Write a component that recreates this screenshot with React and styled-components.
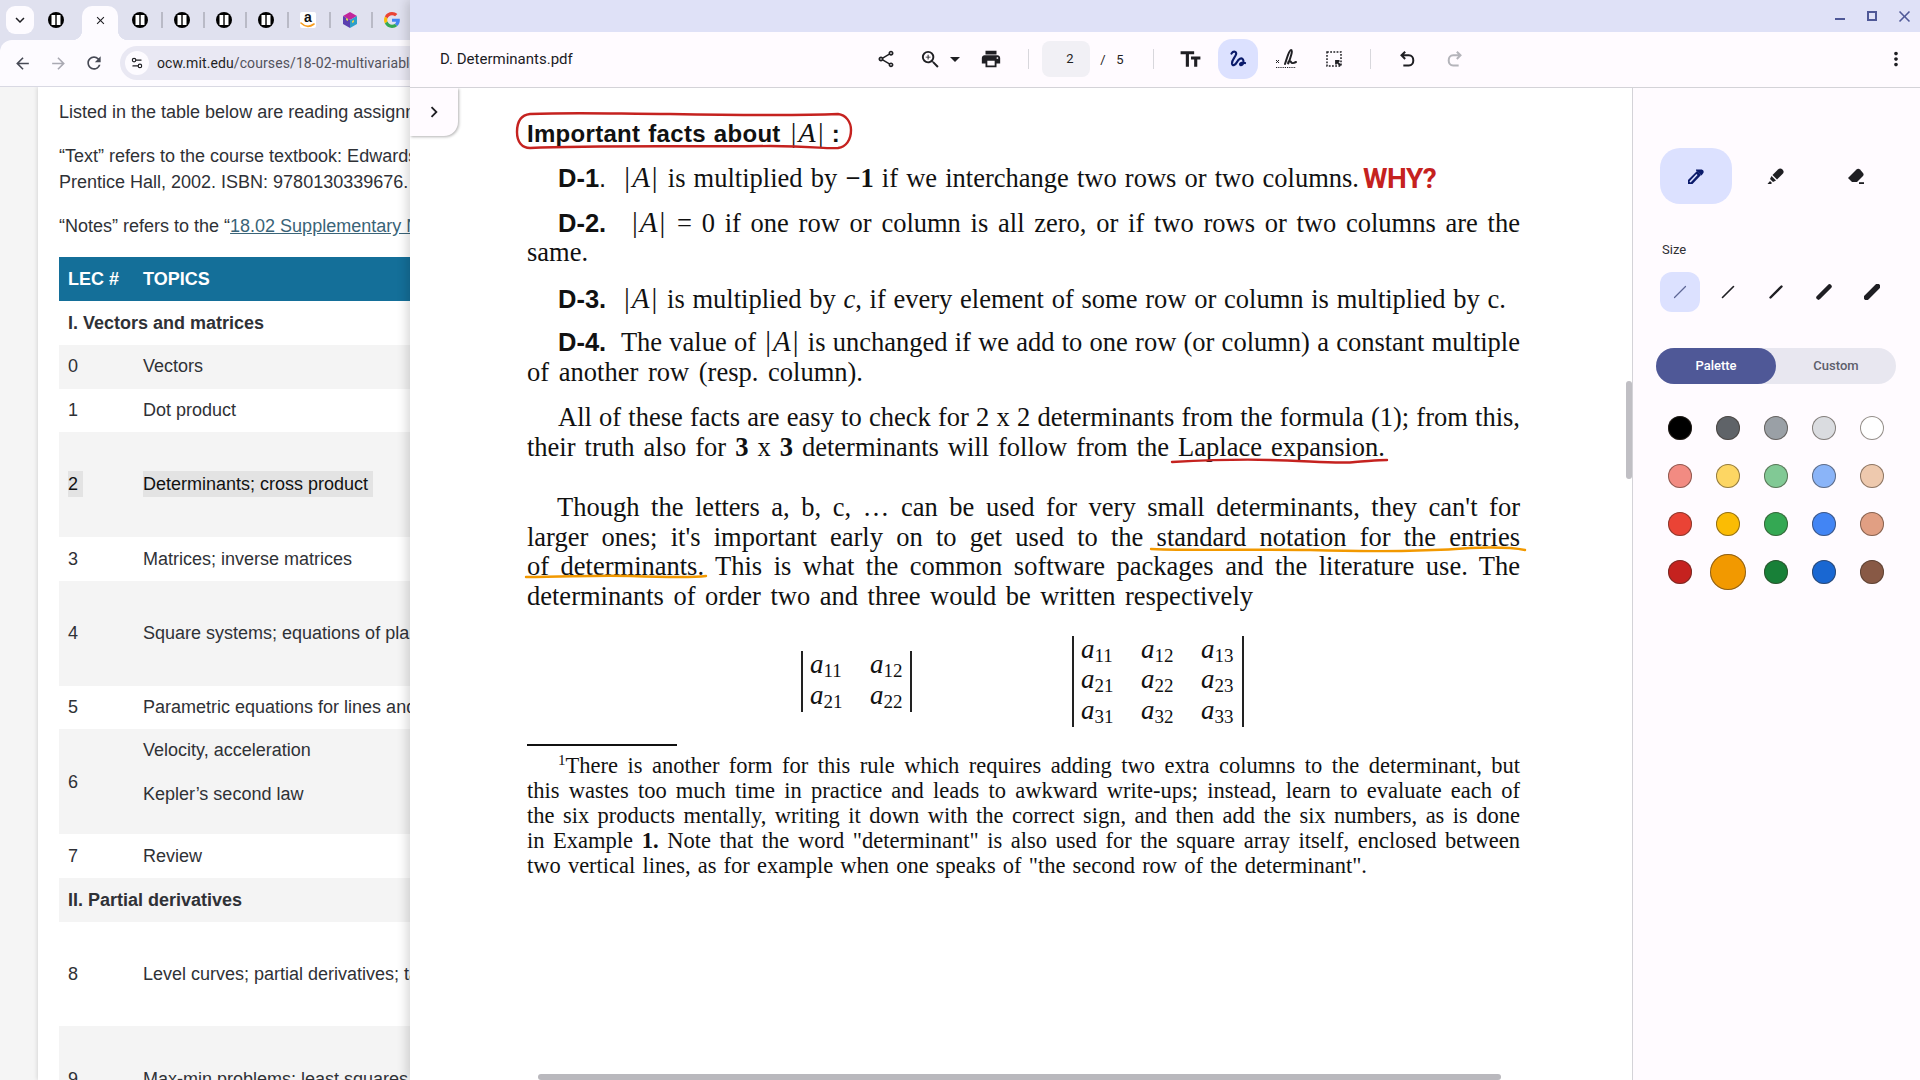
import React from 'react';
import styled, { createGlobalStyle } from 'styled-components';
import {
    MdArrowBack, MdArrowForward, MdRefresh, MdClose, MdKeyboardArrowDown, MdChevronRight,
    MdOutlineShare, MdZoomIn, MdPrint, MdArrowDropDown, MdTextFields, MdMoreVert,
} from 'react-icons/md';
import { Settings2 } from 'lucide-react';

const Global = createGlobalStyle`
    html, body { margin: 0; padding: 0; background: #fff; }
    * { box-sizing: border-box; }
`;

const App = () => (
    <>
        <Global />
        <Screen>
            <BrowserPane>
                <TabStrip>
                    <TabMenu><MdKeyboardArrowDown size={18} /></TabMenu>
                    <FirstSlot><OcwIcon /></FirstSlot>
                    <ActiveTab><MdClose size={13} /></ActiveTab>
                    <TabSlot $sep><OcwIcon /></TabSlot>
                    <TabSlot $sep><OcwIcon /></TabSlot>
                    <TabSlot $sep><OcwIcon /></TabSlot>
                    <TabSlot $sep><OcwIcon /></TabSlot>
                    <TabSlot $sep><AmazonIcon /></TabSlot>
                    <TabSlot $sep><CubeIcon /></TabSlot>
                    <TabSlot><GoogleIcon /></TabSlot>
                </TabStrip>
                <NavBar>
                    <NavIcon><MdArrowBack size={19} /></NavIcon>
                    <NavIcon $off><MdArrowForward size={19} /></NavIcon>
                    <NavIcon><MdRefresh size={20} /></NavIcon>
                    <Omnibox>
                        <SiteChip><Settings2 size={14} strokeWidth={2} /></SiteChip>
                        <Url><b>ocw.mit.edu</b>/courses/18-02-multivariable-calculus-fall-2007</Url>
                    </Omnibox>
                </NavBar>
                <Gutter>
                    <Card>
                        <Para>Listed in the table below are reading assignments for the course.</Para>
                        <Para>“Text” refers to the course textbook: Edwards and Penney, Multivariable Calculus.<br />Prentice Hall, 2002. ISBN: 9780130339676.</Para>
                        <Para>“Notes” refers to the “<CourseLink>18.02 Supplementary Notes</CourseLink>”</Para>
                        <HeadRow>
                            <LecCell>LEC #</LecCell>
                            <TopicCell>TOPICS</TopicCell>
                        </HeadRow>
                        <Row><SectionTitle>I. Vectors and matrices</SectionTitle></Row>
                        <Row $alt><LecCell>0</LecCell><TopicCell>Vectors</TopicCell></Row>
                        <Row><LecCell>1</LecCell><TopicCell>Dot product</TopicCell></Row>
                        <Row $alt $tall>
                            <LecCell><Picked>2</Picked></LecCell>
                            <TopicCell><Picked>Determinants; cross product</Picked></TopicCell>
                        </Row>
                        <Row><LecCell>3</LecCell><TopicCell>Matrices; inverse matrices</TopicCell></Row>
                        <Row $alt $tall><LecCell>4</LecCell><TopicCell>Square systems; equations of planes</TopicCell></Row>
                        <Row><LecCell>5</LecCell><TopicCell>Parametric equations for lines and curves</TopicCell></Row>
                        <Row $alt $tall>
                            <LecCell>6</LecCell>
                            <TopicStack>
                                <TopicLine>Velocity, acceleration</TopicLine>
                                <TopicLine>Kepler’s second law</TopicLine>
                            </TopicStack>
                        </Row>
                        <Row><LecCell>7</LecCell><TopicCell>Review</TopicCell></Row>
                        <Row $alt><SectionTitle>II. Partial derivatives</SectionTitle></Row>
                        <Row $tall><LecCell>8</LecCell><TopicCell>Level curves; partial derivatives; tangent plane</TopicCell></Row>
                        <Row $alt $tall><LecCell>9</LecCell><TopicCell>Max-min problems; least squares</TopicCell></Row>
                    </Card>
                </Gutter>
            </BrowserPane>

            <Viewer>
                <TitleBar>
                    <WinButton><MinGlyph /></WinButton>
                    <WinButton><MaxGlyph /></WinButton>
                    <WinButton><MdClose size={19} /></WinButton>
                </TitleBar>
                <Toolbar>
                    <FileName>D. Determinants.pdf</FileName>
                    <Tool><MdOutlineShare size={20} /></Tool>
                    <Tool $ml={20}><MdZoomIn size={23} /></Tool>
                    <Tool $w={14} $ml={6}><MdArrowDropDown size={24} /></Tool>
                    <Tool $ml={17}><MdPrint size={22} /></Tool>
                    <ToolSep $ml={25} />
                    <PageBox>2</PageBox>
                    <PageText $ml={8}>/</PageText>
                    <PageText $ml={7}>5</PageText>
                    <ToolSep $ml={28} />
                    <Tool $ml={24}><MdTextFields size={25} /></Tool>
                    <InkButton><InkIcon /></InkButton>
                    <Tool $ml={16}><SignIcon /></Tool>
                    <Tool $ml={24}><SelectIcon /></Tool>
                    <ToolSep $ml={24} />
                    <Tool $ml={24}><UndoIcon /></Tool>
                    <Tool $ml={24} $off><RedoIcon /></Tool>
                    <MoreTool><MdMoreVert size={22} /></MoreTool>
                </Toolbar>
                <Body>
                    <PdfArea>
                        <SideToggle><MdChevronRight size={22} /></SideToggle>
                        <Page>
                            <Heading>Important facts about <HeadMath>|<i>A</i>|</HeadMath>:</Heading>
                            <Line $top={14} $indent={31} $w={832}><Tag>D-1<span>.</span></Tag> <Abs /> is multiplied by <b>−1</b> if we interchange two rows or two columns.</Line>
                            <Line $top={15} $indent={31}><Tag $gap={14}>D-2.</Tag> <Abs /> = 0 if one row or column is all zero, or if two rows or two columns are the</Line>
                            <Line>same.</Line>
                            <Line $top={16} $indent={31} $w={979}><Tag>D-3.</Tag> <Abs /> is multiplied by <i>c</i>, if every element of some row or column is multiplied by c.</Line>
                            <Line $top={13} $indent={31}><Tag>D-4.</Tag> The value of <Abs /> is unchanged if we add to one row (or column) a constant multiple</Line>
                            <Line $top={1} $w={336}>of another row (resp. column).</Line>
                            <Line $top={15} $indent={31}>All of these facts are easy to check for 2 x 2 determinants from the formula (1); from this,</Line>
                            <Line $w={858}>their truth also for <b>3</b> x <b>3</b> determinants will follow from the Laplace expansion.</Line>
                            <Line $top={30} $indent={30}>Though the letters a, b, c, … can be used for very small determinants, they can't for</Line>
                            <Line>larger ones; it's important early on to get used to the standard notation for the entries</Line>
                            <Line $top={-1}>of determinants. This is what the common software packages and the literature use. The</Line>
                            <Line $w={726}>determinants of order two and three would be written respectively</Line>
                            <MatrixRow>
                                <Det $ml={274} $cols={2} $w={111}>
                                    {['11', '12', '21', '22'].map(s => <Entry key={s}><i>a</i><sub>{s}</sub></Entry>)}
                                </Det>
                                <Det $ml={160} $cols={3} $w={172}>
                                    {['11', '12', '13', '21', '22', '23', '31', '32', '33'].map(s => <Entry key={s}><i>a</i><sub>{s}</sub></Entry>)}
                                </Det>
                            </MatrixRow>
                            <FootRule />
                            <FootLine $first $indent={31}><sup>1</sup>There is another form for this rule which requires adding two extra columns to the determinant, but</FootLine>
                            <FootLine>this wastes too much time in practice and leads to awkward write-ups; instead, learn to evaluate each of</FootLine>
                            <FootLine>the six products mentally, writing it down with the correct sign, and then add the six numbers, as is done</FootLine>
                            <FootLine>in Example <b>1.</b> Note that the word "determinant" is also used for the square array itself, enclosed between</FootLine>
                            <FootLine $w={840}>two vertical lines, as for example when one speaks of "the second row of the determinant".</FootLine>
                        </Page>
                        <InkLayer viewBox="0 0 1222 992" width="1222" height="992">
                            <path stroke="#c5221f" d="M120 26 C170 24 210 26 260 26 C320 27 380 28 428 26 C436 27 441 34 441 42 C441 52 436 59 428 60 C415 61 405 58 360 58 C280 59 190 57 120 60 C112 60 107 54 107 44 C107 34 111 27 120 26 Z" />
                            <path stroke="#c5221f" d="M762 374 C800 372 830 371 860 372 C900 373 930 376 945 374 C960 373 968 372 977 372" />
                            <path stroke="#f29900" d="M741 461 C790 463 840 461 900 462 C960 464 1020 463 1060 460 C1085 459 1105 460 1115 462" />
                            <path stroke="#f29900" d="M116 489 C160 489 180 487 220 488 C250 489 280 490 296 488" />
                        </InkLayer>
                        <Why>WHY?</Why>
                        <VScroll />
                        <HScroll />
                    </PdfArea>
                    <Sidebar>
                        <ToolRow>
                            <PenKind $on><PenIcon /></PenKind>
                            <PenKind><MarkerIcon /></PenKind>
                            <PenKind><EraserIcon /></PenKind>
                        </ToolRow>
                        <SizeLabel>Size</SizeLabel>
                        <SizeRow>
                            {[1.2, 1.6, 2.4, 4.5, 5.5].map((w, i) => (
                                <SizeChip key={w} $on={i === 0}>
                                    <svg width="16" height="16" viewBox="0 0 16 16">
                                        <line x1="2.500" y1="13.500" x2="13.500" y2="2.500" stroke={i === 0 ? '#5d6696' : '#1f1f23'} strokeWidth={w} strokeLinecap="round" />
                                    </svg>
                                </SizeChip>
                            ))}
                        </SizeRow>
                        <Segment>
                            <SegOn>Palette</SegOn>
                            <SegOff>Custom</SegOff>
                        </Segment>
                        <Swatches>
                            {swatches.map((c, i) => (
                                <SwatchCell key={c + i}><Swatch $big={i === 16} style={{ background: c }} /></SwatchCell>
                            ))}
                        </Swatches>
                    </Sidebar>
                </Body>
            </Viewer>
        </Screen>
    </>
);

const swatches = [
    '#000000', '#5f6368', '#9aa0a6', '#dadce0', '#ffffff',
    '#f28b82', '#fdd663', '#81c995', '#8ab4f8', '#eec9ae',
    '#ea4335', '#fbbc04', '#34a853', '#4285f4', '#e19f83',
    '#c5221f', '#f29900', '#188038', '#1967d2', '#885945',
];

const Abs = () => <AbsMath>|<i>A</i>|</AbsMath>;

const OcwIcon = () => (
    <svg width="16" height="16" viewBox="0 0 16 16">
        <circle cx="8" cy="8" r="8" fill="#000" />
        <rect x="3.500" y="3" width="3.800" height="10" fill="#fff" />
        <rect x="8.700" y="3" width="3.800" height="10" fill="#fff" />
    </svg>
);

const AmazonIcon = () => (
    <AmazonBox>
        a
        <svg width="15" height="6" viewBox="0 0 15 6">
            <path d="M1 1 C5 5 10 5 14 2" fill="none" stroke="#f79c1d" strokeWidth="1.6" strokeLinecap="round" />
        </svg>
    </AmazonBox>
);

const CubeIcon = () => (
    <svg width="16" height="16" viewBox="0 0 16 16">
        <path d="M8 0 L15 4 L8 8 L1 4 Z" fill="#c2269b" />
        <path d="M1 4 L8 8 V16 L1 12 Z" fill="#5b3fb0" />
        <path d="M15 4 L8 8 V16 L15 12 Z" fill="#2e9fc9" />
        <path d="M4 6 L6 7 V9 L4 8 Z M10 9 L12 8 V10 L10 11 Z" fill="#e8d24a" />
    </svg>
);

const GoogleIcon = () => (
    <svg width="16" height="16" viewBox="0 0 48 48">
        <path fill="#EA4335" d="M24 9.5c3.5 0 6.7 1.2 9.2 3.6l6.9-6.9C35.9 2.4 30.5 0 24 0 14.6 0 6.5 5.4 2.6 13.2l8 6.2C12.5 13.6 17.800 9.500 24 9.500z" />
        <path fill="#4285F4" d="M47.500 24.500c0-1.600-.100-3.100-.400-4.500H24v9h12.700c-.600 2.900-2.200 5.400-4.700 7.100l7.700 6c4.500-4.200 7.800-10.300 7.800-17.600z" />
        <path fill="#FBBC05" d="M10.500 28.600c-.500-1.400-.800-3-.800-4.600s.300-3.200.800-4.600l-8-6.200C.900 16.500 0 20.100 0 24s.900 7.500 2.600 10.800l7.900-6.200z" />
        <path fill="#34A853" d="M24 48c6.500 0 11.900-2.100 15.900-5.800l-7.700-6c-2.100 1.400-4.900 2.300-8.200 2.300-6.200 0-11.500-4.200-13.400-9.900l-8 6.200C6.500 42.600 14.600 48 24 48z" />
    </svg>
);

const InkIcon = () => (
    <svg width="18" height="20" viewBox="0 0 18 20" fill="none" stroke="#0b1b6b" strokeWidth="2.2" strokeLinecap="round" strokeLinejoin="round">
        <path d="M2.500 4.500 C4.500 1.500 8 2.500 7 5.500 C6 8.500 2.500 11 3 14.500 C3.500 17.500 6.500 16 8 13 C9.500 10 12.500 8 14 10.500 C15.500 13 13.500 17 11.500 16 C10 15 12.500 12.500 16 14" />
    </svg>
);

const SignIcon = () => (
    <svg width="22" height="24" viewBox="0 0 22 24" fill="none" stroke="#1f1f23">
        <path d="M10 17 C12 11 14 3 16 3 C18 3 16 10 13 17 C13 14 15 13 16 15 C17 17 19 16 21 15" strokeWidth="2" strokeLinecap="round" />
        <path d="M1 13 L4 16 M4 13 L1 16" strokeWidth="1" />
        <path d="M1 20.500 H21" strokeWidth="1.200" strokeDasharray="1.200 1" />
    </svg>
);

const SelectIcon = () => (
    <svg width="18" height="18" viewBox="0 0 18 18" fill="none">
        <rect x="2" y="2" width="14" height="14" stroke="#1f1f23" strokeWidth="1.500" strokeDasharray="1.800 1.400" />
        <path d="M15.500 15.500 L12 12 M11 14.500 V11 H14.500" stroke="#1f1f23" strokeWidth="1.800" />
    </svg>
);

const UndoIcon = () => (
    <svg width="22" height="22" viewBox="0 0 24 24" fill="none" stroke="currentColor" strokeWidth="2.200">
        <path d="M10 4 L6 8 L10 12 M6 8 H14 C20.500 8 20.500 19 14 19 H8" />
    </svg>
);

const RedoIcon = () => (
    <svg width="22" height="22" viewBox="0 0 24 24" fill="none" stroke="currentColor" strokeWidth="2.200">
        <path d="M14 4 L18 8 L14 12 M18 8 H10 C3.500 8 3.500 19 10 19 H16" />
    </svg>
);

const PenIcon = () => (
    <svg width="18" height="18" viewBox="0 0 18 18" fill="#0b1b6b">
        <path d="M1 17 V13 L10 4 L14 8 L5.500 17 Z" />
        <path d="M3 15 L10 7.500" stroke="#dce1ff" strokeWidth="1.600" />
        <path d="M9 2.500 H14 C16.500 2.500 17.500 5 16 6.500 L14.500 8.500 L9 3.500 Z" />
    </svg>
);

const MarkerIcon = () => (
    <svg width="18" height="18" viewBox="0 0 18 18" fill="#1f1f23">
        <path d="M5.500 8 L11 2.500 C12.500 1 14 1 15.500 2.500 C17 4 17 5.500 15.500 7 L10 12.500 Z" />
        <path d="M4.500 9 L9 13.500 L6 15 L3 12 Z" />
        <path d="M0.500 17 L3 14 L5 16 L4 17 Z" />
    </svg>
);

const EraserIcon = () => (
    <svg width="18" height="18" viewBox="0 0 18 18" fill="#1f1f23">
        <path d="M1 11 L9.500 2.500 C10.500 1.500 12 1.500 13 2.500 L16 6 C16.800 7 16.800 8 16 9 L10 15 L5 15 Z" />
        <rect x="12" y="15.200" width="5" height="1.800" />
    </svg>
);

const Screen = styled.div`
    width: 1920px;
    height: 1080px;
    display: flex;
    overflow: hidden;
    font-family: Roboto, sans-serif;
`;

const BrowserPane = styled.div`
    width: 410px;
    flex: none;
    display: flex;
    flex-direction: column;
    background: #e0e1ef;
    overflow: hidden;
`;

const TabStrip = styled.div`
    height: 40px;
    flex: none;
    display: flex;
    align-items: flex-start;
    padding: 6px 0 0 6px;
`;

const TabMenu = styled.div`
    width: 28px;
    height: 28px;
    flex: none;
    border-radius: 9px;
    background: #fdfbff;
    color: #1f1f23;
    display: flex;
    align-items: center;
    justify-content: center;
`;

const FirstSlot = styled.div`
    width: 44px;
    height: 28px;
    flex: none;
    display: flex;
    align-items: center;
    justify-content: center;
    margin-right: 4px;
`;

const ActiveTab = styled.div`
    width: 36px;
    height: 34px;
    flex: none;
    margin-right: 1px;
    position: relative;
    background: #fdfbff;
    border-radius: 10px 10px 0 0;
    color: #1f1f23;
    display: flex;
    align-items: flex-start;
    justify-content: center;
    padding-top: 8px;

    &::before, &::after {
        content: '';
        position: absolute;
        bottom: 0;
        width: 10px;
        height: 10px;
    }
    &::before {
        left: -10px;
        background: radial-gradient(circle at 0 0, transparent 10px, #fdfbff 10.5px);
    }
    &::after {
        right: -10px;
        background: radial-gradient(circle at 100% 0, transparent 10px, #fdfbff 10.5px);
    }
`;

const TabSlot = styled.div`
    width: 42px;
    height: 28px;
    flex: none;
    position: relative;
    display: flex;
    align-items: center;
    justify-content: center;

    &::after {
        content: '';
        display: ${p => (p.$sep ? 'block' : 'none')};
        position: absolute;
        right: -2px;
        top: 6px;
        width: 2px;
        height: 16px;
        background: #b9bac6;
    }
`;

const AmazonBox = styled.div`
    width: 16px;
    height: 16px;
    border-radius: 2px;
    background: #fff;
    color: #111;
    font: 700 14px/11px 'Liberation Sans', sans-serif;
    text-align: center;
    overflow: hidden;

    svg { display: block; margin-top: -1px; }
`;

const NavBar = styled.div`
    height: 47px;
    flex: none;
    display: flex;
    align-items: center;
    background: #fdfbff;
    border-radius: 12px 0 0 0;
    border-bottom: 1px solid #d9d9e3;
    padding-left: 4px;
`;

const NavIcon = styled.div`
    width: 36px;
    flex: none;
    display: flex;
    justify-content: center;
    color: ${p => (p.$off ? '#a9a9b2' : '#474a55')};
`;

const Omnibox = styled.div`
    margin-left: 8px;
    flex: 1;
    min-width: 0;
    height: 34px;
    border-radius: 17px 0 0 17px;
    background: #e9e8f3;
    display: flex;
    align-items: center;
    padding-left: 5px;
    overflow: hidden;
`;

const SiteChip = styled.div`
    width: 24px;
    height: 24px;
    flex: none;
    border-radius: 50%;
    background: #fdfbff;
    color: #1f1f23;
    display: flex;
    align-items: center;
    justify-content: center;
`;

const Url = styled.div`
    margin-left: 8px;
    font: 400 14px Roboto, sans-serif;
    letter-spacing: 0.1px;
    color: #52525c;
    white-space: nowrap;

    b { font-weight: 400; color: #1f1f23; }
`;

const Gutter = styled.div`
    flex: 1;
    min-height: 0;
    background: #f5f5f5;
    padding-left: 38px;
    overflow: hidden;
`;

const Card = styled.div`
    height: 100%;
    background: #fff;
    box-shadow: -1px 0 4px rgba(0, 0, 0, 0.12);
    padding: 12px 0 0 21px;
    color: #2f3136;
    font: 400 18px/26.500px 'Liberation Sans', Arial, sans-serif;
    white-space: nowrap;
    overflow: hidden;
`;

const Para = styled.p`
    margin: 0 0 17.330px;
`;

const CourseLink = styled.span`
    color: #3a6478;
    text-decoration: underline;
`;

const Row = styled.div`
    width: 700px;
    height: ${p => (p.$tall ? 104.7 : 43.85)}px;
    display: flex;
    align-items: center;
    background: ${p => (p.$alt ? '#f4f4f4' : '#fff')};
`;

const HeadRow = styled(Row)`
    background: #146f99;
    color: #fff;
    font-weight: 700;
`;

const LecCell = styled.div`
    width: 84px;
    flex: none;
    padding-left: 9px;
`;

const TopicCell = styled.div`
    flex: 1;
`;

const TopicStack = styled.div`
    flex: 1;
    align-self: flex-start;
`;

const TopicLine = styled.div`
    height: 43.850px;
    line-height: 43.850px;
`;

const SectionTitle = styled.div`
    padding-left: 9px;
    font-weight: 700;
`;

const Picked = styled.span`
    display: inline-block;
    background: #e3e3e3;
    color: #111;
    padding-right: 5px;
    line-height: 26px;
`;

const Viewer = styled.div`
    width: 1510px;
    flex: none;
    display: flex;
    flex-direction: column;
    position: relative;
    z-index: 2;
    box-shadow: -3px 0 10px rgba(0, 0, 0, 0.16);
`;

const TitleBar = styled.div`
    height: 32px;
    flex: none;
    background: #dfe1f7;
    display: flex;
    justify-content: flex-end;
    color: #4f5897;
`;

const WinButton = styled.div`
    width: 32px;
    display: flex;
    align-items: center;
    justify-content: center;
`;

const MinGlyph = styled.div`
    width: 10px;
    height: 2px;
    background: #4f5897;
    margin-top: 6px;
`;

const MaxGlyph = styled.div`
    width: 10px;
    height: 10px;
    border: 2px solid #4f5897;
`;

const Toolbar = styled.div`
    height: 56px;
    flex: none;
    display: flex;
    align-items: center;
    background: #fffbff;
    border-bottom: 1px solid #d4d3d8;
    padding: 0 0 1px 30px;
    color: #1f1f23;
`;

const FileName = styled.div`
    width: 434px;
    flex: none;
    font: 400 15px Roboto, sans-serif;
    color: #1b1b1f;
`;

const Tool = styled.div`
    width: ${p => p.$w || 24}px;
    height: 24px;
    flex: none;
    margin-left: ${p => p.$ml || 0}px;
    display: flex;
    align-items: center;
    justify-content: center;
    color: ${p => (p.$off ? '#b4b4ba' : '#1f1f23')};

    svg { flex: none; }
`;

const MoreTool = styled(Tool)`
    margin-left: auto;
    margin-right: 12px;
`;

const ToolSep = styled.div`
    width: 1px;
    height: 20px;
    flex: none;
    margin-left: ${p => p.$ml}px;
    background: #d8d7dc;
`;

const PageBox = styled.div`
    width: 48px;
    height: 36px;
    flex: none;
    margin-left: 13px;
    border-radius: 8px;
    background: #f1f0f5;
    font: 400 13px/36px Roboto, sans-serif;
    text-align: center;
    padding-left: 8px;
`;

const PageText = styled.div`
    width: 10px;
    flex: none;
    margin-left: ${p => p.$ml}px;
    font: 400 13px Roboto, sans-serif;
    text-align: center;
`;

const InkButton = styled.div`
    width: 40px;
    height: 40px;
    flex: none;
    margin-left: 16px;
    border-radius: 14px;
    background: #dce1ff;
    display: flex;
    align-items: center;
    justify-content: center;
`;

const Body = styled.div`
    flex: 1;
    min-height: 0;
    display: flex;
`;

const PdfArea = styled.div`
    flex: 1;
    min-width: 0;
    position: relative;
    background: #fff;
    overflow: hidden;
`;

const SideToggle = styled.div`
    position: absolute;
    left: 0;
    top: 0;
    width: 48px;
    height: 48px;
    background: #fffbff;
    border-radius: 0 0 14px 0;
    box-shadow: 1px 1px 3px rgba(0, 0, 0, 0.3);
    display: flex;
    align-items: center;
    justify-content: center;
    color: #1f1f23;
    z-index: 3;
`;

const Page = styled.div`
    padding: 30px 0 0 117px;
    color: #111;
    font: 400 26.500px/30px 'Liberation Serif', 'Times New Roman', serif;
`;

const Heading = styled.div`
    height: 30px;
    font: 700 24px/30px 'Liberation Sans', Arial, sans-serif;
    letter-spacing: 0.3px;
    word-spacing: 1px;
`;

const HeadMath = styled.span`
    font: 400 28px/30px 'Liberation Serif', serif;
    margin: 0 8px 0 2px;

    i { padding: 0 2px; }
`;

const AbsMath = styled.span`
    font-size: 29px;
    padding: 0 2px;

    i { padding: 0 2px; }
`;

const Line = styled.div`
    width: ${p => p.$w || 993}px;
    height: 30px;
    margin-top: ${p => p.$top || 0}px;
    padding-left: ${p => p.$indent || 0}px;
    text-align: justify;
    text-align-last: justify;
`;

const Tag = styled.span`
    font: 700 25.500px 'Liberation Sans', Arial, sans-serif;
    margin-right: ${p => p.$gap || 8}px;

    span { font-weight: 400; }
`;

const MatrixRow = styled.div`
    margin-top: 25px;
    height: 91px;
    display: flex;
    align-items: center;
`;

const Det = styled.div`
    width: ${p => p.$w}px;
    margin-left: ${p => p.$ml}px;
    flex: none;
    display: grid;
    grid-template-columns: repeat(${p => p.$cols}, 60px);
    grid-auto-rows: 30.500px;
    padding-left: 7px;
    border-left: 2px solid #222;
    border-right: 2px solid #222;
`;

const Entry = styled.div`
    font-size: 27px;
    line-height: 26px;
    white-space: nowrap;

    sub {
        font-size: 19px;
        line-height: 0;
        vertical-align: -4px;
    }
`;

const FootRule = styled.div`
    width: 150px;
    height: 2px;
    margin-top: 17px;
    background: #111;
`;

const FootLine = styled.div`
    width: ${p => p.$w || 993}px;
    height: 25px;
    margin-top: ${p => (p.$first ? 6.5 : 0)}px;
    padding-left: ${p => p.$indent || 0}px;
    font-size: 22.500px;
    line-height: 25px;
    text-align: justify;
    text-align-last: justify;

    sup {
        font-size: 15px;
        line-height: 0;
    }
`;

const InkLayer = styled.svg`
    position: absolute;
    left: 0;
    top: 0;
    pointer-events: none;

    path {
        fill: none;
        stroke-width: 2.400;
        stroke-linecap: round;
    }
`;

const Why = styled.div`
    position: absolute;
    left: 953px;
    top: 74px;
    font: 700 28px/34px Roboto, sans-serif;
    letter-spacing: -0.500px;
    color: #c5221f;
`;

const VScroll = styled.div`
    position: absolute;
    right: 0;
    top: 293px;
    width: 6px;
    height: 98px;
    border-radius: 3px;
    background: #c0bfc4;
`;

const HScroll = styled.div`
    position: absolute;
    left: 128px;
    bottom: 0;
    width: 963px;
    height: 6px;
    border-radius: 3px;
    background: #b9b8bd;
`;

const Sidebar = styled.div`
    width: 288px;
    flex: none;
    background: #fffbff;
    border-left: 1px solid #d4d3d8;
    padding: 60px 0 0 27px;
`;

const ToolRow = styled.div`
    display: flex;
    gap: 8px;
`;

const PenKind = styled.div`
    width: 72px;
    height: 56px;
    border-radius: 20px;
    background: ${p => (p.$on ? '#dce1ff' : 'transparent')};
    display: flex;
    align-items: center;
    justify-content: center;
`;

const SizeLabel = styled.div`
    margin: 37px 0 0 2px;
    font: 400 13px/18px Roboto, sans-serif;
    color: #303034;
`;

const SizeRow = styled.div`
    margin-top: 13px;
    display: flex;
    gap: 8px;
`;

const SizeChip = styled.div`
    width: 40px;
    height: 40px;
    border-radius: 12px;
    background: ${p => (p.$on ? '#dce1ff' : 'transparent')};
    display: flex;
    align-items: center;
    justify-content: center;
`;

const Segment = styled.div`
    width: 240px;
    height: 36px;
    margin: 36px 0 0 -4px;
    border-radius: 18px;
    background: #e8e7f0;
    display: flex;
    font: 500 13px/36px Roboto, sans-serif;
    text-align: center;
`;

const SegOn = styled.div`
    width: 120px;
    border-radius: 18px;
    background: #4f5897;
    color: #fff;
`;

const SegOff = styled.div`
    width: 120px;
    color: #5d5e6b;
`;

const Swatches = styled.div`
    margin: 20px 0 0 -4px;
    display: grid;
    grid-template-columns: repeat(5, 48px);
    grid-auto-rows: 48px;
`;

const SwatchCell = styled.div`
    display: flex;
    align-items: center;
    justify-content: center;
`;

const Swatch = styled.div`
    width: ${p => (p.$big ? 36 : 24)}px;
    height: ${p => (p.$big ? 36 : 24)}px;
    border-radius: 50%;
    box-shadow: inset 0 0 0 1px rgba(60, 50, 40, 0.55);
`;

export default App;
